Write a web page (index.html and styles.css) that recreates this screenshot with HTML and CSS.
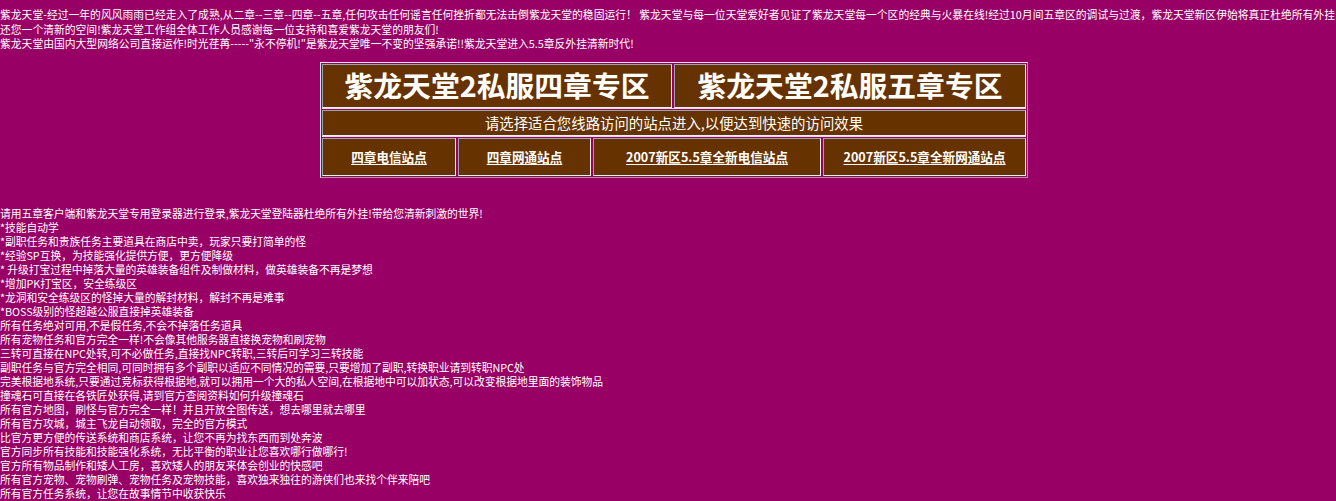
FILE: index.html
```html
<!DOCTYPE html>
<html lang="zh-CN">
<head>
<meta charset="utf-8">
<title>紫龙天堂2私服</title>
<link rel="stylesheet" href="styles.css">
</head>
<body>
<div class="intro">紫龙天堂-经过一年的风风雨雨已经走入了成熟,从二章--三章--四章--五章,任何攻击任何谣言任何挫折都无法击倒紫龙天堂的稳固运行！ 紫龙天堂与每一位天堂爱好者见证了紫龙天堂每一个区的经典与火暴在线!经过10月间五章区的调试与过渡，紫龙天堂新区伊始将真正杜绝所有外挂!<br>还您一个清新的空间!紫龙天堂工作组全体工作人员感谢每一位支持和喜爱紫龙天堂的朋友们!<br>紫龙天堂由国内大型网络公司直接运作!时光荏苒-----"永不停机!"是紫龙天堂唯一不变的坚强承诺!!紫龙天堂进入5.5章反外挂清新时代!</div>

<div class="portal">
  <div class="row row-title">
    <div class="cell c-half1">紫龙天堂2私服四章专区</div>
    <div class="cell c-half2">紫龙天堂2私服五章专区</div>
  </div>
  <div class="row row-note">
    <div class="cell c-full">请选择适合您线路访问的站点进入,以便达到快速的访问效果</div>
  </div>
  <div class="row row-links">
    <div class="cell c-l1"><a href="#">四章电信站点</a></div>
    <div class="cell c-l2"><a href="#">四章网通站点</a></div>
    <div class="cell c-l3"><a href="#">2007新区5.5章全新电信站点</a></div>
    <div class="cell c-l4"><a href="#">2007新区5.5章全新网通站点</a></div>
  </div>
</div>

<div class="features">请用五章客户端和紫龙天堂专用登录器进行登录,紫龙天堂登陆器杜绝所有外挂!带给您清新刺激的世界!<br>*技能自动学<br>*副职任务和贵族任务主要道具在商店中卖，玩家只要打简单的怪<br>*经验SP互换，为技能强化提供方便，更方便降级<br>* 升级打宝过程中掉落大量的英雄装备组件及制做材料，做英雄装备不再是梦想<br>*增加PK打宝区，安全练级区<br>*龙洞和安全练级区的怪掉大量的解封材料，解封不再是难事<br>*BOSS级别的怪超越公服直接掉英雄装备<br>所有任务绝对可用,不是假任务,不会不掉落任务道具<br>所有宠物任务和官方完全一样!不会像其他服务器直接换宠物和刷宠物<br>三转可直接在NPC处转,可不必做任务,直接找NPC转职,三转后可学习三转技能<br>副职任务与官方完全相同,可同时拥有多个副职以适应不同情况的需要,只要增加了副职,转换职业请到转职NPC处<br>完美根据地系统,只要通过竞标获得根据地,就可以拥用一个大的私人空间,在根据地中可以加状态,可以改变根据地里面的装饰物品<br>撞魂石可直接在各铁匠处获得,请到官方查阅资料如何升级撞魂石<br>所有官方地图，刷怪与官方完全一样！并且开放全图传送，想去哪里就去哪里<br>所有官方攻城，城主飞龙自动领取，完全的官方模式<br>比官方更方便的传送系统和商店系统，让您不再为找东西而到处奔波<br>官方同步所有技能和技能强化系统，无比平衡的职业让您喜欢哪行做哪行!<br>官方所有物品制作和矮人工房，喜欢矮人的朋友来体会创业的快感吧<br>所有官方宠物、宠物刷弹、宠物任务及宠物技能，喜欢独来独往的游侠们也来找个伴来陪吧<br>所有官方任务系统，让您在故事情节中收获快乐</div>
</body>
</html>
```

FILE: styles.css
```css
html, body {
  margin: 0;
  padding: 0;
}
body {
  background: #990066;
  color: #ffffff;
  font-family: "Noto Sans CJK SC", "Microsoft YaHei", sans-serif;
  font-size: 10.8px;
  overflow: hidden;
}
.intro {
  padding-top: 7px;
  line-height: 14.5px;
  white-space: nowrap;
}
.portal {
  margin: 11px 0 0 320px;
  width: 704px;
  padding: 1px;
  border: 1px solid;
  border-color: #e8e8e8 #a0a0a0 #a0a0a0 #e8e8e8;
}
.row {
  display: flex;
  gap: 2px;
}
.row-note,
.row-links {
  border-top: 1px solid #e0e0e0;
  padding-top: 1px;
}
.cell {
  box-sizing: border-box;
  background: #663300;
  border: 1px solid;
  border-color: #a0a0b0 #f0f0f0 #f0f0f0 #a0a0b0;
  display: flex;
  align-items: center;
  justify-content: center;
  white-space: nowrap;
}
.row-title .cell {
  height: 44px;
  font-size: 28.8px;
  font-weight: bold;
  padding-bottom: 2px;
}
.c-half1 { width: 350px; }
.c-half2 { width: 352px; }
.row-note .cell {
  height: 26px;
  font-size: 14.4px;
}
.c-full { width: 704px; }
.row-links .cell {
  height: 38px;
  font-size: 12.6px;
  font-weight: bold;
}
.c-l1 { width: 134px; }
.c-l2 { width: 133px; }
.c-l3 { width: 228px; }
.c-l4 { width: 203px; }
.row-links a {
  color: #ffffff;
  text-decoration: underline;
  text-underline-offset: 2px;
}
.features {
  margin-top: 28px;
  line-height: 14px;
  white-space: nowrap;
  letter-spacing: -0.05px;
}
```
